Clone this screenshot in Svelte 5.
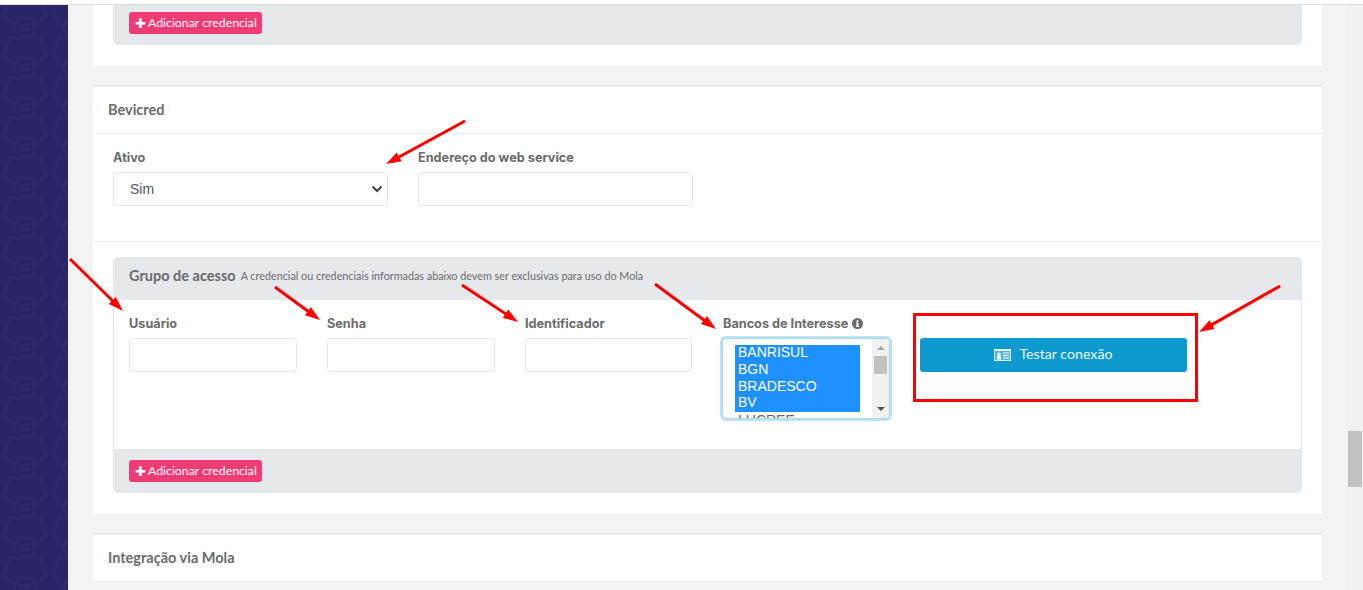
<script>
  const banks = ['BANRISUL', 'BGN', 'BRADESCO', 'BV'];
  const fields = [
    { name: 'Usuário', narrow: false },
    { name: 'Senha', narrow: false },
    { name: 'Identificador', narrow: true }
  ];
  const arrows = [
    [465, 121, 386, 164],
    [70, 259, 123, 311],
    [275, 287, 320, 320],
    [462, 285, 518, 322],
    [655, 284, 716, 329],
    [1280, 286, 1199, 332]
  ];
  function head(a) {
    const [x1, y1, x2, y2] = a;
    const l = Math.hypot(x2 - x1, y2 - y1);
    const ux = (x2 - x1) / l, uy = (y2 - y1) / l;
    const bx = x2 - ux * 15, by = y2 - uy * 15;
    return `${x2},${y2} ${bx - uy * 5},${by + ux * 5} ${bx + uy * 5},${by - ux * 5}`;
  }
</script>

<div class="page">
  <div class="topbar"></div>
  <div class="main">
    <aside class="sidebar">
      <svg width="68" height="585" aria-hidden="true">
        <defs>
          <pattern id="hex" width="49" height="40" patternUnits="userSpaceOnUse" y="10">
            <path d="M19 3h12l5 9-5 9H19l-5-9zM19 10h12M19 14h12M10 23h30l6 17M10 23 4 40M4 0l10 12M46 0 36 12" fill="none" stroke="#302c6c" stroke-width="1.300" />
          </pattern>
        </defs>
        <rect width="68" height="585" fill="url(#hex)" />
      </svg>
    </aside>
    <main class="content">
      <section class="card first">
        <div class="group-footer short">
          <button class="add"><span class="plus">✚</span> Adicionar credencial</button>
        </div>
      </section>

      <section class="card">
        <h2>Bevicred</h2>
        <div class="general">
          <div class="field wide">
            <span class="label">Ativo</span>
            <div class="control select">
              <span>Sim</span>
              <svg width="12" height="8" viewBox="0 0 12 8"><path d="M1.500 1.500 6 6l4.500-4.500" fill="none" stroke="#444" stroke-width="2" /></svg>
            </div>
          </div>
          <div class="field wide">
            <span class="label">Endereço do web service</span>
            <div class="control"></div>
          </div>
        </div>
        <div class="group-wrap">
          <div class="group">
            <div class="group-head">
              <strong>Grupo de acesso</strong>
              <small>A credencial ou credenciais informadas abaixo devem ser exclusivas para uso do Mola</small>
            </div>
            <div class="group-body">
              {#each fields as f}
                <div class="field" class:narrow={f.narrow}>
                  <span class="label">{f.name}</span>
                  <div class="control"></div>
                </div>
              {/each}
              <div class="field">
                <span class="label shifted">Bancos de Interesse
                  <svg width="11" height="11" viewBox="0 0 12 12"><circle cx="6" cy="6" r="6" fill="#6b6b6b" /><rect x="5" y="5" width="2" height="4.500" fill="#fff" /><rect x="4.300" y="8.500" width="3.400" height="1" fill="#fff" /><rect x="4.300" y="5" width="2" height="1" fill="#fff" /><circle cx="6" cy="3.200" r="1.100" fill="#fff" /></svg>
                </span>
                <div class="listbox">
                  <div class="options">
                    <div class="selected">
                      {#each banks as b}<div class="opt">{b}</div>{/each}
                    </div>
                    <div class="opt rest">LUCREE</div>
                  </div>
                  <div class="sb">
                    <i class="up"></i>
                    <b></b>
                    <i class="down"></i>
                  </div>
                </div>
              </div>
              <div class="test-col">
                <button class="test">
                  <svg width="17" height="12" viewBox="0 0 17 12"><path fill-rule="evenodd" d="M0 0h17v12H0zM1 2v9h15V2z" fill="#e4f4fb" /><rect x="1" y="2" width="15" height="9" fill="#d8eff9" opacity=".35" /><rect x="3" y="6.500" width="4" height="4" fill="#fff" /><circle cx="5" cy="5" r="1.600" fill="#fff" /><path d="M9 4h6M9 6.500h6M9 9h6" stroke="#fff" /></svg>
                  Testar conexão
                </button>
              </div>
            </div>
            <div class="group-footer">
              <button class="add"><span class="plus">✚</span> Adicionar credencial</button>
            </div>
          </div>
        </div>
      </section>

      <section class="card">
        <h2>Integração via Mola</h2>
      </section>
    </main>
    <div class="scrollbar"><div class="thumb"></div></div>
  </div>

  <div class="red-box"></div>
  <svg class="arrows" width="1363" height="590" aria-hidden="true">
    {#each arrows as a}
      <line x1={a[0]} y1={a[1]} x2={(a[0] + a[2]) / 2 + (a[2] - a[0]) * 0.4} y2={(a[1] + a[3]) / 2 + (a[3] - a[1]) * 0.4} stroke="#ff0000" stroke-width="3" />
      <polygon points={head(a)} fill="#ff0000" />
    {/each}
  </svg>
</div>

<style>
  :global(body) { margin: 0; background: #f3f3f3; overflow: hidden; }
  .page { position: relative; width: 1363px; height: 590px; overflow: hidden; display: flex; flex-direction: column; font-family: "Lato", "Open Sans", sans-serif; color: #6b6b6b; }
  .topbar { height: 4px; background: #fff; border-bottom: 1px solid #dcdcdc; flex: none; }
  .main { display: flex; flex: 1; min-height: 0; }
  .sidebar { width: 68px; background: #2a2565; flex: none; }
  .sidebar svg { display: block; }
  .content { flex: 1; padding: 0 25px; min-width: 0; display: flex; flex-direction: column; gap: 20px; }
  .scrollbar { width: 16px; background: #f1f1f1; flex: none; padding: 426px 1px 0; box-sizing: border-box; }
  .thumb { height: 56px; background: #c1c1c1; }
  .card { background: #fff; flex: none; border-top: 2px solid #e6e9ec; }
  .card.first { border-top: 0; padding: 0 20px 20px; }
  h2 { margin: 0; height: 46px; line-height: 45px; padding: 0 15px; font-size: 14.500px; font-weight: 700; color: #6b6b6b; border-bottom: 1px solid #e9ebec; box-sizing: content-box; }
  .general { display: flex; gap: 30px; padding: 16px 20px 0; height: 91px; border-bottom: 1px solid #e9ebec; }
  .field { display: flex; flex-direction: column; width: 168px; }
  .field.wide { width: 275px; }
  .field.narrow { width: 167px; }
  .label { font-family: "Inter", sans-serif; font-weight: 700; font-size: 12.700px; line-height: 15px; height: 15px; margin-bottom: 7px; color: #6b6b6b; white-space: nowrap; display: flex; align-items: center; gap: 4px; }
  .label.shifted { padding-left: 1px; }
  .control { height: 34px; box-sizing: border-box; border: 1px solid #e4e6e8; border-radius: 4px; background: #fff; }
  .select { display: flex; align-items: center; justify-content: space-between; padding: 0 4px 0 16px; font: 14px "Liberation Sans", sans-serif; color: #555; }
  .group-wrap { padding: 15px 20px 20px; }
  .group { border-radius: 5px; overflow: hidden; }
  .group-head { height: 43px; padding: 0 16px 6px; box-sizing: border-box; background: #e6e9ec; display: flex; align-items: center; gap: 5px; white-space: nowrap; }
  .group-head strong { font-size: 14.500px; font-weight: 700; }
  .group-head small { font-size: 10.800px; }
  .group-body { height: 149px; box-sizing: border-box; padding: 16px 15px 0; display: flex; gap: 30px; border: solid #e6e9ec; border-width: 0 1px; }
  .listbox { height: 81px; box-sizing: border-box; border: 1px solid #a6d8ed; box-shadow: 0 0 0 2px #bde3f3; border-radius: 4px; display: flex; overflow: hidden; background: #fff; margin: 0; }
  .options { flex: 1; padding: 6px 12px 0 12px; font: 14px/15px "Liberation Sans", sans-serif; color: #666; overflow: hidden; }
  .selected { background: #1e90ff; color: #fff; height: 67px; overflow: hidden; }
  .opt { height: 17px; padding-left: 3px; }
  .selected .opt:nth-child(4) { height: 16px; line-height: 13px; }
  .opt.rest { line-height: 17px; }
  .sb { width: 17px; background: #f1f1f1; flex: none; position: relative; display: flex; flex-direction: column; align-items: center; }
  .sb b { display: block; width: 13px; height: 18px; background: #c1c1c1; margin-top: 6px; }
  .sb i { display: block; width: 0; height: 0; border: 4px solid transparent; }
  .sb .up { border-bottom: 4px solid #a3a3a3; border-top: 0; margin-top: 7px; }
  .sb .down { border-top: 4px solid #505050; border-bottom: 0; position: absolute; bottom: 7px; }
  .test-col { padding-top: 22px; }
  .test { width: 267px; height: 34px; padding: 0 0 4px; border: 0; border-radius: 3px; background: #0e99cf; color: #eaf7fc; font: 14.200px "Lato", sans-serif; display: flex; align-items: center; justify-content: center; gap: 8px; }
  .test svg { margin-top: 4px; }
  .group-footer { height: 44px; background: #e6e9ec; padding: 11px 16px 0; box-sizing: border-box; }
  .group-footer.short { height: 40px; padding-top: 7px; border-radius: 0 0 5px 5px; }
  .add { height: 22px; padding: 0 0 2px 6px; width: 133px; border: 0; border-radius: 3px; background: #f03c76; color: #fff; font: 12.300px "Lato", sans-serif; display: flex; align-items: center; gap: 2px; white-space: nowrap; }
  .plus { font-size: 13px; line-height: 1; margin-top: 2px; }
  .red-box { position: absolute; left: 913px; top: 313px; width: 285px; height: 89px; box-sizing: border-box; border: 3px solid #ff0000; }
  .arrows { position: absolute; left: 0; top: 0; pointer-events: none; }
</style>
